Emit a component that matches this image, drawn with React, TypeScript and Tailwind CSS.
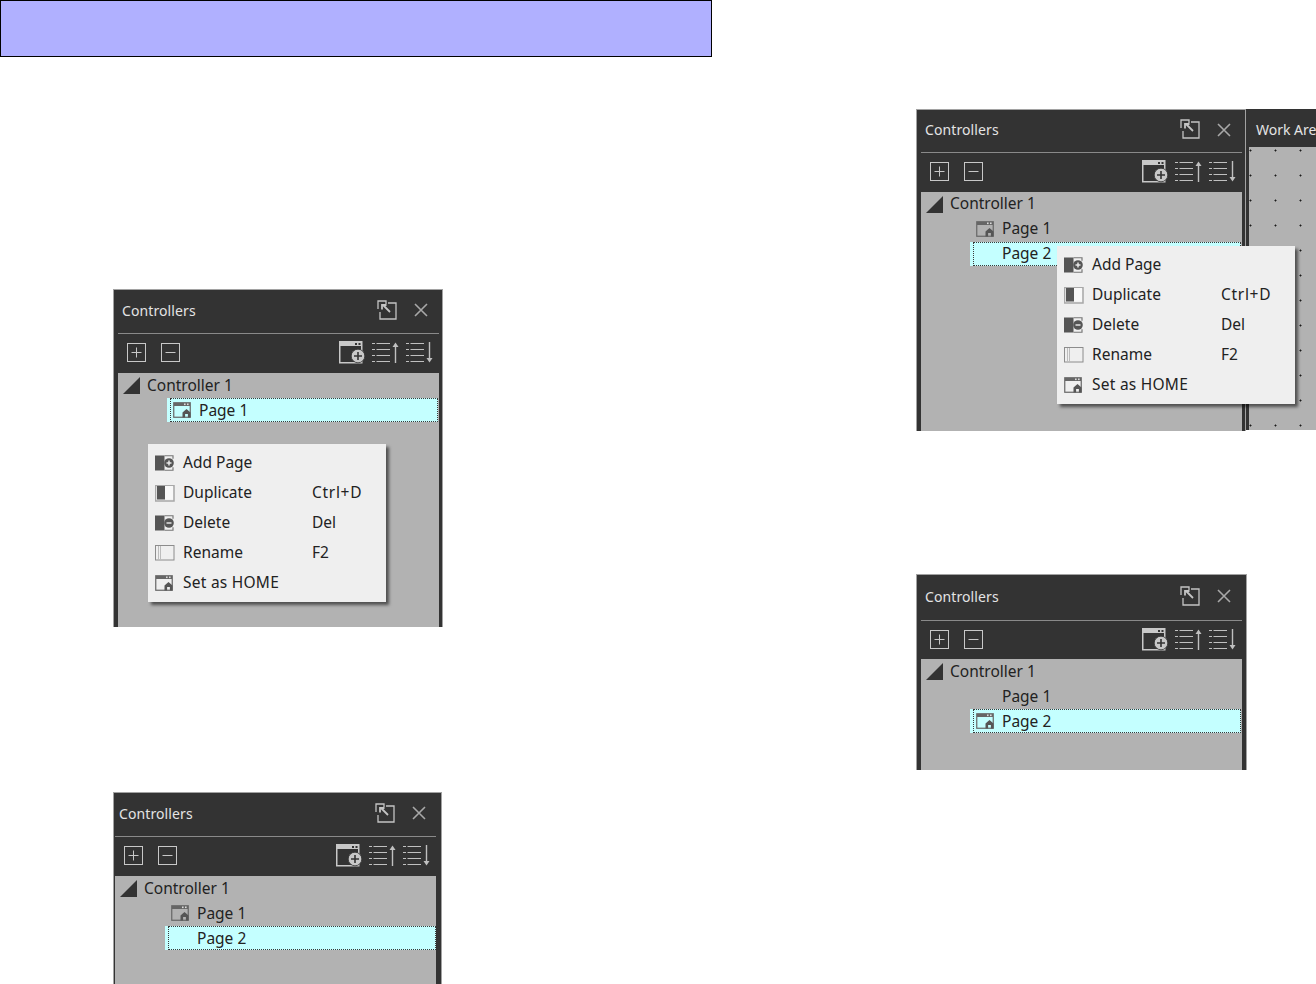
import React from "react";

const FONT = "font-['Noto_Sans','Open_Sans',sans-serif]";

function PopOutIcon() {
  return (
    <svg width="20" height="20" viewBox="0 0 20 20" fill="none" stroke="#c4c4c4" strokeWidth="1.3" className="block">
      <path d="M1 9V1h8v3" />
      <path d="M11 3h8v16H3v-7" />
      <path d="M13 12L6 5" strokeWidth="1.8" />
      <path d="M5 9.5V5h4.5" strokeWidth="1.8" />
    </svg>
  );
}

function CloseIcon() {
  return (
    <svg width="14" height="14" viewBox="0 0 14 14" fill="none" stroke="#a8a8a8" strokeWidth="1.6" className="block">
      <path d="M1 1l12 12M13 1L1 13" />
    </svg>
  );
}

function BoxIcon({ plus }: { plus?: boolean }) {
  return (
    <svg width="19" height="19" viewBox="0 0 19 19" fill="none" stroke="#c8c8c8" className="block">
      <rect x="0.5" y="0.5" width="18" height="18" strokeWidth="1" />
      <path d="M4.5 9.5h10" strokeWidth="1" />
      {plus && <path d="M9.5 4.5v10" strokeWidth="1" />}
    </svg>
  );
}

function AddWindowIcon() {
  return (
    <svg width="26" height="23" viewBox="0 0 26 23" className="block" fill="none">
      <rect x="0.75" y="0.75" width="22" height="21" stroke="#c8c8c8" strokeWidth="1.5" />
      <rect x="1" y="1" width="21.5" height="4" fill="#c8c8c8" />
      <rect x="16" y="2" width="2" height="2" fill="#333" />
      <rect x="19.5" y="2" width="2" height="2" fill="#333" />
      <circle cx="19" cy="15" r="6.8" fill="#c8c8c8" stroke="#333" strokeWidth="0.8" />
      <path d="M15 15h8M19 11v8" stroke="#333" strokeWidth="1.6" />
    </svg>
  );
}

function ListIcon({ up }: { up?: boolean }) {
  return (
    <svg width="27" height="21" viewBox="0 0 27 21" className="block" fill="none" stroke="#c0c0c0">
      <path d="M0 1.5h3M4.5 1.5H18M0 7.5h3M4.5 7.5H18M0 13.5h3M4.5 13.5H18M0 19.5h3M4.5 19.5H18" strokeWidth="1" />
      {up ? (
        <>
          <path d="M23.5 4v17" strokeWidth="1.4" />
          <path d="M20.5 5L23.5 0.5 26.5 5z" fill="#c0c0c0" stroke="none" />
        </>
      ) : (
        <>
          <path d="M23.5 0v17" strokeWidth="1.4" />
          <path d="M20.5 16L23.5 20.5 26.5 16z" fill="#c0c0c0" stroke="none" />
        </>
      )}
    </svg>
  );
}

function HomePageIcon() {
  return (
    <svg width="19" height="16" viewBox="0 0 19 16" className="block" fill="none">
      <rect x="0.75" y="0.75" width="16.5" height="14.5" stroke="#666" strokeWidth="1.2" />
      <rect x="1" y="1" width="16" height="3" fill="#666" />
      <rect x="11" y="1.5" width="1.6" height="1.6" fill="#ddd" />
      <rect x="14" y="1.5" width="1.6" height="1.6" fill="#ddd" />
      <path d="M9.5 15.5V10.5L13.5 7l4 3.5v5h-2.6v-3.5h-2.8v3.5z" fill="#555" />
    </svg>
  );
}

function MenuIcon({ kind }: { kind: "add" | "dup" | "del" | "ren" | "home" }) {
  if (kind === "home") return <HomePageIcon />;
  if (kind === "ren") {
    return (
      <svg width="20" height="16" viewBox="0 0 20 16" className="block" fill="none" stroke="#8c8c8c">
        <rect x="0.5" y="0.5" width="18.5" height="14.5" />
        <path d="M3.5 1v14M5.5 1v14" stroke="#bcbcbc" />
      </svg>
    );
  }
  if (kind === "dup") {
    return (
      <svg width="20" height="17" viewBox="0 0 20 17" className="block" fill="none">
        <rect x="0.5" y="0.5" width="18.5" height="15.5" stroke="#a8a8a8" strokeWidth="1.5" />
        <rect x="2" y="1" width="8" height="13.5" fill="#555" />
        <rect x="10" y="1" width="8" height="13.5" fill="#f8f8f8" />
      </svg>
    );
  }
  return (
    <svg width="20" height="16" viewBox="0 0 20 16" className="block" fill="none">
      <rect x="0" y="0.5" width="9.5" height="15" fill="#555" />
      <path d="M9.5 0.75H18v3M9.5 15.25H18v-3" stroke="#777" strokeWidth="1.2" />
      <circle cx="14" cy="8" r="4.8" fill="#555" />
      <path d="M11.5 8h5" stroke="#efefef" strokeWidth="1.4" />
      {kind === "add" && <path d="M14 5.5v5" stroke="#efefef" strokeWidth="1.4" />}
    </svg>
  );
}

type MenuEntry = {
  kind: "add" | "dup" | "del" | "ren" | "home";
  label: string;
  labelClass?: string;
  key?: string;
  keyClass?: string;
};

const MENU: MenuEntry[] = [
  { kind: "add", label: "Add Page" },
  { kind: "dup", label: "Duplicate", key: "Ctrl+D", keyClass: "tracking-[0.7px]" },
  { kind: "del", label: "Delete", key: "Del" },
  { kind: "ren", label: "Rename", key: "F2" },
  { kind: "home", label: "Set as HOME", labelClass: "tracking-[0.25px]" },
];

function ContextMenu({ className }: { className: string }) {
  return (
    <div className={`absolute w-[238px] bg-[#efefef] py-[4px] shadow-[3px_3px_3px_rgba(0,0,0,0.55)] ${className}`}>
      {MENU.map((m) => (
        <div key={m.label} className="flex h-[30px] items-center text-[15.5px] leading-none text-[#222]">
          <div className="ml-[7px] flex w-[28px] shrink-0 items-center">
            <MenuIcon kind={m.kind} />
          </div>
          <div className={`w-[129px] shrink-0 ${m.labelClass ?? ""}`}>{m.label}</div>
          <div className={m.keyClass ?? ""}>{m.key}</div>
        </div>
      ))}
    </div>
  );
}

function PageRow({
  label,
  home,
  selected,
  tight,
  shifted,
}: {
  label: string;
  home?: boolean;
  selected?: boolean;
  tight?: boolean;
  shifted?: boolean;
}) {
  return (
    <div className="flex h-[25px]">
      <div
        className={`mb-[1px] w-[271px] pl-[3px] ${shifted ? "ml-[50px]" : "ml-[49px]"} ${
          selected ? "bg-[#c4ffff]" : ""
        }`}
      >
        <div
          className={`flex h-full items-center border pl-[2px] ${
            selected ? "border-dotted border-[#3a3a3a]" : "border-transparent"
          }`}
        >
          <div className="flex w-[26px] shrink-0 items-center">{home && <HomePageIcon />}</div>
          <span className={`text-[15.5px] leading-none text-[#222] ${tight ? "" : "pt-[2px]"}`}>{label}</span>
        </div>
      </div>
    </div>
  );
}

function Panel({
  width,
  height,
  pad,
  headH,
  toolH = 39,
  tight,
  shifted,
  pages,
}: {
  width: number;
  height: number;
  pad: number;
  headH: number;
  toolH?: number;
  tight?: boolean;
  shifted?: boolean;
  pages: { label: string; home?: boolean; selected?: boolean }[];
}) {
  return (
    <div
      className="flex shrink-0 flex-col overflow-hidden border border-b-0 border-[#a2a2a2] bg-[#333]"
      style={{ width, height, paddingLeft: pad }}
    >
      <div className="flex w-[321px] shrink-0 flex-col" style={{ height: headH + toolH }}>
        <div
          className={`flex shrink-0 items-center border-b border-[#8a8a8a] pb-[2px] pl-[4px] ${
            shifted ? "pr-0" : "pr-[1px]"
          }`}
          style={{ height: headH }}
        >
          <span className="text-[14px] leading-none tracking-[0.1px] text-[#e4e4e4]">Controllers</span>
          <div className="mb-[2px] ml-auto mr-[17px]">
            <PopOutIcon />
          </div>
          <div className="mb-[1px] mr-[10px]">
            <CloseIcon />
          </div>
        </div>
        <div className="flex flex-1 items-center pb-[2px] pl-[9px]">
          <BoxIcon plus />
          <div className="ml-[15px]">
            <BoxIcon />
          </div>
          <div className="ml-[159px]">
            <AddWindowIcon />
          </div>
          <div className="ml-[7px]">
            <ListIcon up />
          </div>
          <div className="ml-[7px]">
            <ListIcon />
          </div>
        </div>
      </div>
      <div className="w-[321px] flex-1 bg-[#b2b2b2]">
        <div className="flex h-[25px] items-center pl-[5px]">
          <svg width="17" height="17" viewBox="0 0 17 17" className="block">
            <path d="M0 17L17 0v17z" fill="#333" />
          </svg>
          <span className={`ml-[7px] text-[15.5px] leading-none text-[#222] ${tight ? "pb-[2px]" : ""}`}>
            Controller 1
          </span>
        </div>
        {pages.map((p) => (
          <PageRow key={p.label} {...p} tight={tight} shifted={shifted} />
        ))}
      </div>
    </div>
  );
}

function WorkArea() {
  return (
    <div className="flex h-[321px] flex-1 flex-col overflow-hidden border-l-[3px] border-[#333] bg-[#333]">
      <div className="flex h-[38px] shrink-0 items-center pl-[7px] pt-[3px]">
        <span className="whitespace-nowrap text-[14px] leading-none text-[#e4e4e4]">Work Are</span>
      </div>
      <div className="flex-1 bg-[#b2b2b2] bg-[radial-gradient(circle_at_1.5px_3.5px,#1a1a1a_0.9px,transparent_1.1px)] bg-[length:25px_25px]" />
    </div>
  );
}

export default function App() {
  return (
    <div className={`flex h-[984px] w-[1316px] overflow-hidden bg-white ${FONT}`}>
      <div className="flex w-[712px] shrink-0 flex-col">
        <div className="h-[57px] w-[712px] border border-black bg-[#b0b0ff]" />
        <div className="relative ml-[113px] mt-[232px] w-fit">
          <Panel
            width={330}
            height={338}
            pad={4}
            headH={44}
            pages={[{ label: "Page 1", home: true, selected: true }]}
          />
          <ContextMenu className="left-[35px] top-[155px]" />
        </div>
        <div className="ml-[113px] mt-[165px]">
          <Panel
            width={329}
            height={192}
            pad={1}
            headH={44}
            shifted
            pages={[{ label: "Page 1", home: true }, { label: "Page 2", selected: true }]}
          />
        </div>
      </div>
      <div className="ml-[204px] flex flex-1 flex-col">
        <div className="relative mt-[109px] flex w-[400px]">
          <Panel
            width={330}
            height={322}
            pad={4}
            headH={43}
            tight
            pages={[{ label: "Page 1", home: true }, { label: "Page 2", selected: true }]}
          />
          <WorkArea />
          <ContextMenu className="left-[141px] top-[137px]" />
        </div>
        <div className="mt-[143px]">
          <Panel
            width={331}
            height={196}
            pad={4}
            headH={46}
            toolH={38}
            pages={[{ label: "Page 1" }, { label: "Page 2", home: true, selected: true }]}
          />
        </div>
      </div>
    </div>
  );
}
